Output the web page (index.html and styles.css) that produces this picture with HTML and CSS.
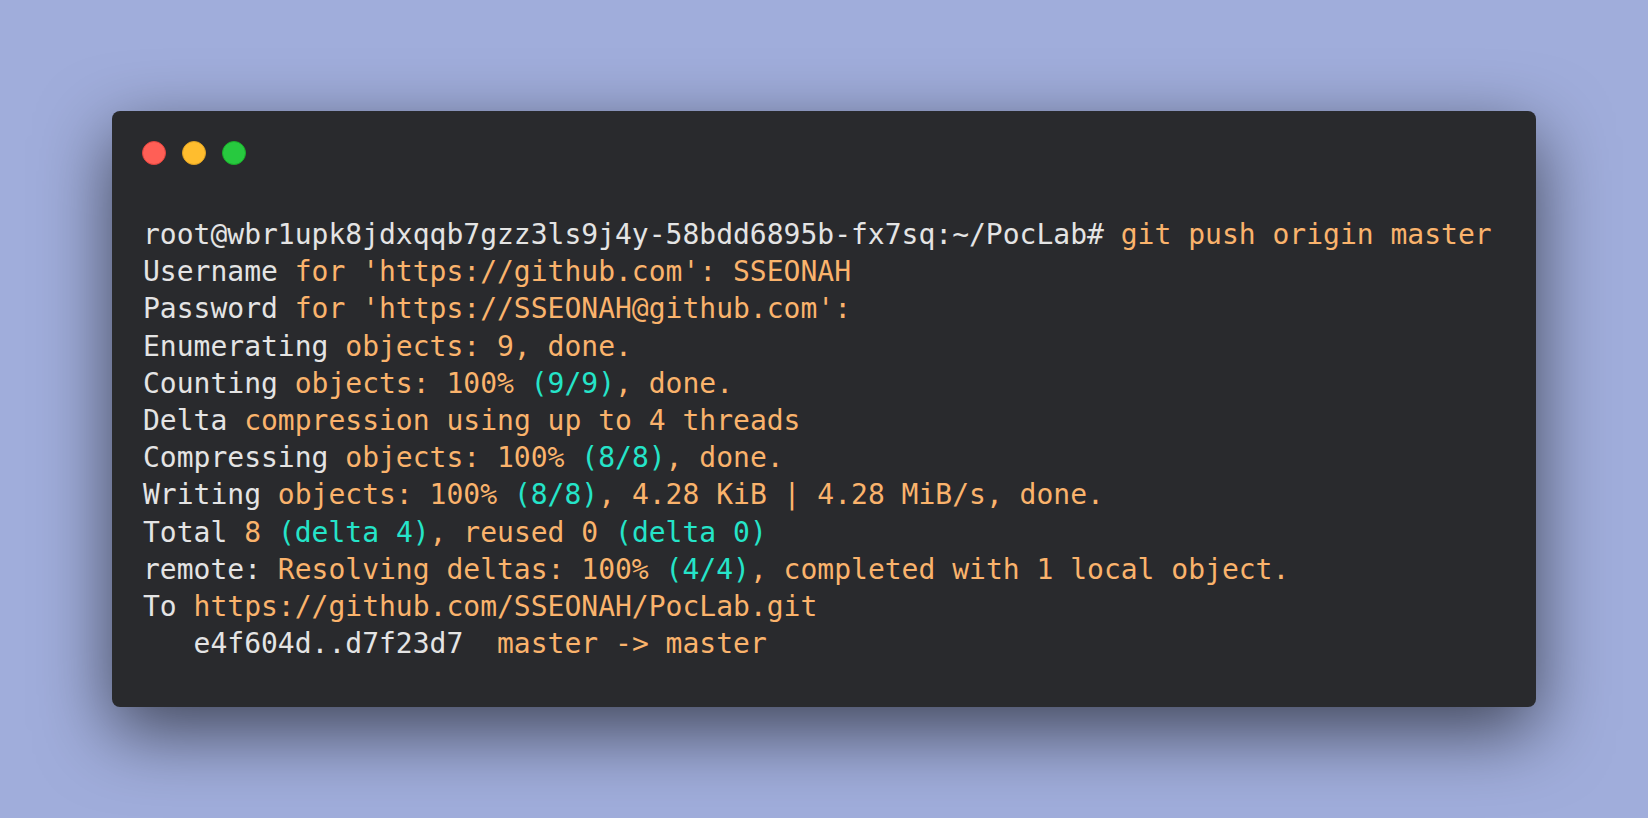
FILE: index.html
```html
<!DOCTYPE html>
<html>
<head>
<meta charset="utf-8">
<link rel="stylesheet" href="styles.css">
</head>
<body>
<div class="window">
  <div class="controls">
    <span class="dot red"></span>
    <span class="dot yellow"></span>
    <span class="dot green"></span>
  </div>
  <pre class="code"><span class="w">root@wbr1upk8jdxqqb7gzz3ls9j4y-58bdd6895b-fx7sq:~/PocLab# </span><span class="o">git push origin master</span>
<span class="w">Username </span><span class="o">for 'https://github.com': SSEONAH</span>
<span class="w">Password </span><span class="o">for 'https://SSEONAH@github.com':</span>
<span class="w">Enumerating </span><span class="o">objects: 9, done.</span>
<span class="w">Counting </span><span class="o">objects: 100% </span><span class="c">(9/9)</span><span class="o">, done.</span>
<span class="w">Delta </span><span class="o">compression using up to 4 threads</span>
<span class="w">Compressing </span><span class="o">objects: 100% </span><span class="c">(8/8)</span><span class="o">, done.</span>
<span class="w">Writing </span><span class="o">objects: 100% </span><span class="c">(8/8)</span><span class="o">, 4.28 KiB | 4.28 MiB/s, done.</span>
<span class="w">Total </span><span class="o">8 </span><span class="c">(delta 4)</span><span class="o">, reused 0 </span><span class="c">(delta 0)</span>
<span class="w">remote: </span><span class="o">Resolving deltas: 100% </span><span class="c">(4/4)</span><span class="o">, completed with 1 local object.</span>
<span class="w">To </span><span class="o">https://github.com/SSEONAH/PocLab.git</span>
<span class="w">   e4f604d..d7f23d7  </span><span class="o">master -&gt; master</span></pre>
</div>
</body>
</html>
```
FILE: styles.css
```css
html, body {
  margin: 0;
  padding: 0;
}
body {
  width: 1648px;
  height: 818px;
  overflow: hidden;
  background: #a0addb;
  padding-top: 111px;
  box-sizing: border-box;
}
.window {
  margin-left: 112px;
  width: 1424px;
  height: 596px;
  box-sizing: border-box;
  background: #292a2d;
  border-radius: 8px;
  box-shadow: 0 24px 72px rgba(0, 0, 0, 0.6);
  padding: 30px 0 0 30px;
}
.controls {
  display: flex;
  gap: 16px;
  height: 25px;
}
.dot {
  width: 24px;
  height: 24px;
  border-radius: 50%;
  box-sizing: border-box;
}
.red { background: #ff5f56; border: 1px solid #e0443e; }
.yellow { background: #ffbd2e; border: 1px solid #dea123; }
.green { background: #27c93f; border: 1px solid #1aab29; }
.code {
  margin: 50px 0 0 1px;
  font-family: "DejaVu Sans Mono", monospace;
  font-size: 28px;
  line-height: 37.2px;
  white-space: pre;
  color: #e4e4e4;
}
.w { color: #e4e4e4; }
.o { color: #fab36c; }
.c { color: #25e4c9; }
```
